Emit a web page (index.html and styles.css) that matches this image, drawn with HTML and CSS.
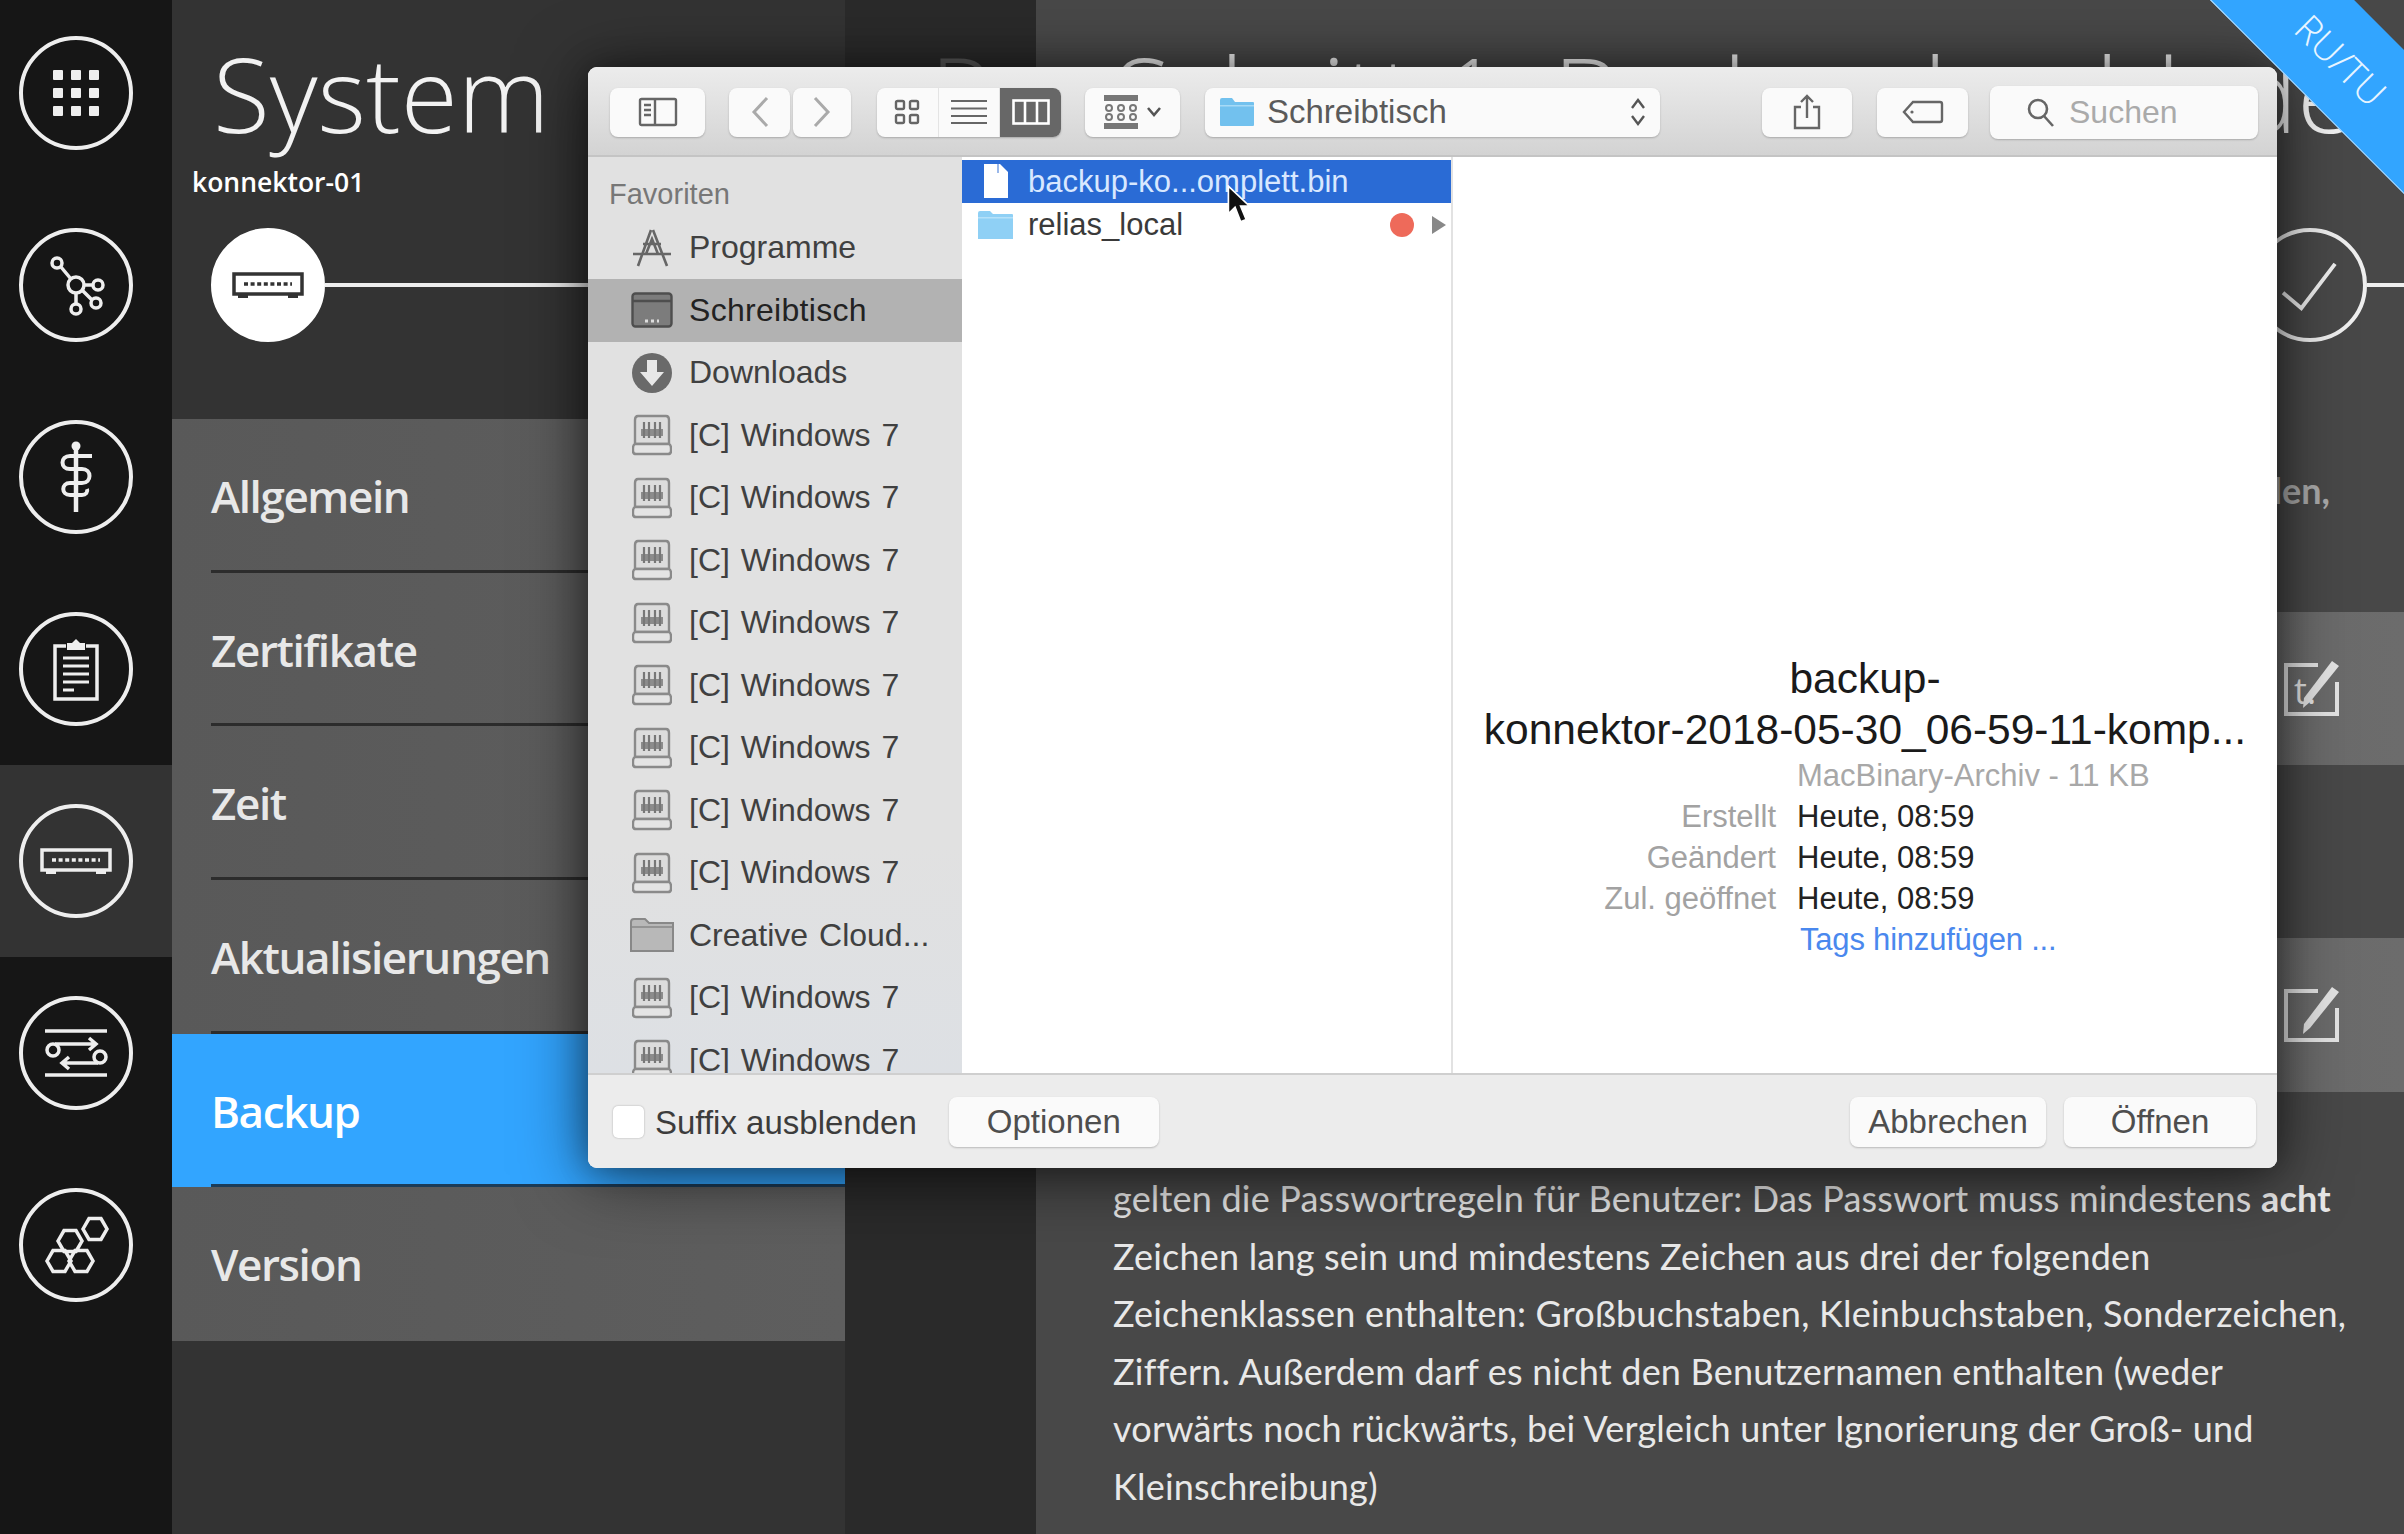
FILE: index.html
```html
<!DOCTYPE html>
<html lang="de">
<head>
  <meta charset="UTF-8" />
  <title>System - konnektor-01</title>
  <link rel="stylesheet" href="styles.css">
</head>
<body>
  <svg class="defs" width="0" height="0">
    <symbol id="device" viewBox="-36 -14 72 28">
      <rect x="-34" y="-11" width="68" height="20" fill="none" stroke="currentColor" stroke-width="3.5"/>
      <path d="M-24 -1H24" stroke="currentColor" stroke-width="3.5" stroke-dasharray="4 2.6" fill="none"/>
      <path d="M-30 11H-20M20 11H30" stroke="currentColor" stroke-width="4" fill="none"/>
    </symbol>
    <symbol id="disk" viewBox="0 0 40 42">
      <path d="M6 2H34Q37 2 37 6V30H3V6Q3 2 6 2Z" fill="#dcdcdc" stroke="#8a8a8a" stroke-width="2.4"/>
      <path d="M3 30Q1 31 1 34V37Q1 40 4 40H36Q39 40 39 37V34Q39 31 37 30Z" fill="#e4e4e4" stroke="#8a8a8a" stroke-width="2.4"/>
      <path d="M9 15H31V22H9Z" fill="#8c8c8c"/>
      <path d="M12 8V24M17 8V24M23 8V24M28 8V24" stroke="#777" stroke-width="2.2"/>
    </symbol>
    <symbol id="edit-pen" viewBox="0 0 58 58">
      <path d="M36 5H4V54H55V22" fill="none" stroke="currentColor" stroke-width="4"/>
      <path d="M57 6L28 42L21 48L22 38L50 1Z" fill="currentColor"/>
    </symbol>
  </svg>

  <div class="page">
    <nav class="rail">
      <div class="rail-item">
        <span class="circle">
          <svg viewBox="-53 -53 106 106"><g fill="currentColor">
            <rect x="-23" y="-23" width="10" height="10" rx="1"/><rect x="-5" y="-23" width="10" height="10" rx="1"/><rect x="13" y="-23" width="10" height="10" rx="1"/>
            <rect x="-23" y="-5" width="10" height="10" rx="1"/><rect x="-5" y="-5" width="10" height="10" rx="1"/><rect x="13" y="-5" width="10" height="10" rx="1"/>
            <rect x="-23" y="13" width="10" height="10" rx="1"/><rect x="-5" y="13" width="10" height="10" rx="1"/><rect x="13" y="13" width="10" height="10" rx="1"/>
          </g></svg>
        </span>
      </div>
      <div class="rail-item">
        <span class="circle">
          <svg viewBox="-53 -53 106 106"><g fill="none" stroke="currentColor" stroke-width="3.5">
            <circle r="8"/><circle cx="-19" cy="-22" r="5"/><circle cx="22" cy="0" r="5"/><circle cx="20" cy="18" r="5"/><circle cx="0" cy="24" r="5"/>
            <path d="M-5 -6L-15 -18M8 0H17M6 5L16 15M0 8V19"/>
          </g></svg>
        </span>
      </div>
      <div class="rail-item">
        <span class="circle">
          <svg viewBox="-53 -53 106 106">
            <circle cx="0" cy="-31" r="4.5" fill="currentColor"/>
            <path d="M0 -30V35" stroke="currentColor" stroke-width="4.5" fill="none"/>
            <path d="M16 -21H-6C-16 -21 -16 -8 -6 -8H6C16 -8 16 6 6 6H-6C-15 6 -15 18 -6 18H6C10 18 12 15 11 12" stroke="currentColor" stroke-width="4" fill="none"/>
          </svg>
        </span>
      </div>
      <div class="rail-item">
        <span class="circle">
          <svg viewBox="-53 -53 106 106">
            <path d="M-10 -23H-21V30H21V-23H10" fill="none" stroke="currentColor" stroke-width="3.5"/>
            <path d="M-9 -26H-4L0 -30L4 -26H9V-19H-9Z" fill="currentColor"/>
            <path d="M-13 -11H13M-13 -3H13M-13 5H13M-13 13H13M-13 21H-2" stroke="currentColor" stroke-width="3" fill="none"/>
          </svg>
        </span>
      </div>
      <div class="rail-item active">
        <span class="circle">
          <svg class="device-icon"><use href="#device"/></svg>
        </span>
      </div>
      <div class="rail-item">
        <span class="circle">
          <svg viewBox="-53 -53 106 106"><g fill="none" stroke="currentColor" stroke-width="3.5">
            <path d="M-31 -22H31M-31 22H31"/>
            <circle cx="-23" cy="-3" r="6"/><circle cx="24" cy="4" r="6"/>
            <path d="M-21 -9H20M13 -15L20 -9L13 -3M22 10H-14M-7 4L-14 10L-7 16"/>
          </g></svg>
        </span>
      </div>
      <div class="rail-item">
        <span class="circle">
          <svg viewBox="-53 -53 106 106"><g fill="none" stroke="currentColor" stroke-width="3.5">
            <path d="M-29 16L-23 5.6H-11L-5 16L-11 26.4H-23Z"/>
            <path d="M-7 16L-1 5.6H11L17 16L11 26.4H-1Z"/>
            <path d="M-18 -4L-12 -14.4H0L6 -4L0 6.4H-12Z"/>
            <path d="M7 -16L13 -26.4H25L31 -16L25 -5.6H13Z"/>
          </g></svg>
        </span>
      </div>
    </nav>

    <aside class="side">
      <header class="side-head">
        <h1 class="big-title">System</h1>
        <div class="host">konnektor-01</div>
        <div class="stepper">
          <span class="circle filled"><svg class="device-icon"><use href="#device"/></svg></span>
          <span class="step-line"></span>
        </div>
      </header>
      <ul class="menu">
        <li class="menu-item"><span>Allgemein</span></li>
        <li class="menu-item"><span>Zertifikate</span></li>
        <li class="menu-item"><span>Zeit</span></li>
        <li class="menu-item"><span>Aktualisierungen</span></li>
        <li class="menu-item selected"><span>Backup</span></li>
        <li class="menu-item last"><span>Version</span></li>
      </ul>
    </aside>

    <div class="spacer-col"></div>

    <main class="main">
      <h2 class="big-title step-title"><span class="prev-step">P</span>Schritt 1: Backup hochladen</h2>
      <div class="stepper main-stepper">
        <span class="step-line"></span>
        <span class="circle done">
          <svg viewBox="-55 -55 110 110"><path d="M-28 8L-9 24L26 -22" fill="none" stroke="currentColor" stroke-width="4"/></svg>
        </span>
        <span class="step-line tail"></span>
      </div>
      <p class="intro">Wählen Sie eine Sicherung zum Hochladen,</p>
      <div class="row-box">
        <svg class="edit-icon" viewBox="0 0 58 58">
          <use href="#edit-pen"/>
          <text x="12" y="44" class="edit-t">t.</text>
        </svg>
      </div>
      <div class="row-box second">
        <svg class="edit-icon"><use href="#edit-pen"/></svg>
      </div>
      <p class="rules">gelten die Passwortregeln für Benutzer: Das Passwort muss mindestens <b>acht</b><br>
        Zeichen lang sein und mindestens Zeichen aus drei der folgenden<br>
        Zeichenklassen enthalten: Großbuchstaben, Kleinbuchstaben, Sonderzeichen,<br>
        Ziffern. Außerdem darf es nicht den Benutzernamen enthalten (weder<br>
        vorwärts noch rückwärts, bei Vergleich unter Ignorierung der Groß- und<br>
        Kleinschreibung)</p>
    </main>
  </div>

  <!-- datei-dialog -->
  <section class="dialog">
    <div class="toolbar">
      <button class="tb-btn btn-sidebar">
        <svg width="40" height="30" viewBox="0 0 40 30"><g fill="none" stroke="#666" stroke-width="2.4">
          <rect x="2" y="2" width="36" height="26" rx="1.5"/><path d="M17 2V28M6 8H13M6 13H13M6 18H13"/>
        </g></svg>
      </button>
      <button class="tb-btn btn-back">
        <svg width="20" height="34" viewBox="0 0 20 34"><path d="M17 3L4 17L17 31" fill="none" stroke="#aaa" stroke-width="3"/></svg>
      </button>
      <button class="tb-btn btn-forward">
        <svg width="20" height="34" viewBox="0 0 20 34"><path d="M3 3L16 17L3 31" fill="none" stroke="#aaa" stroke-width="3"/></svg>
      </button>
      <div class="segment">
        <span class="seg">
          <svg width="26" height="26" viewBox="0 0 26 26"><g fill="none" stroke="#666" stroke-width="2.4">
            <rect x="2" y="2" width="8" height="8" rx="1.5"/><rect x="16" y="2" width="8" height="8" rx="1.5"/><rect x="2" y="16" width="8" height="8" rx="1.5"/><rect x="16" y="16" width="8" height="8" rx="1.5"/>
          </g></svg>
        </span>
        <span class="seg">
          <svg width="36" height="26" viewBox="0 0 36 26"><path d="M0 2H36M0 9.500H36M0 17H36M0 24H36" stroke="#666" stroke-width="2.2"/></svg>
        </span>
        <span class="seg on">
          <svg width="38" height="26" viewBox="0 0 38 26"><g fill="none" stroke="#fff" stroke-width="2.6">
            <rect x="1.500" y="1.500" width="35" height="23"/><path d="M13 1.500V24.500M25 1.500V24.500"/>
          </g></svg>
        </span>
      </div>
      <button class="tb-btn btn-arrange">
        <svg width="34" height="34" viewBox="0 0 34 34"><g fill="#777">
          <rect x="0" y="0" width="34" height="6"/><rect x="0" y="28" width="34" height="6"/>
        </g><g fill="none" stroke="#777" stroke-width="2">
          <circle cx="5" cy="13" r="3"/><circle cx="17" cy="13" r="3"/><circle cx="29" cy="13" r="3"/>
          <circle cx="5" cy="22" r="3"/><circle cx="17" cy="22" r="3"/><circle cx="29" cy="22" r="3"/>
        </g></svg>
        <svg width="16" height="10" viewBox="0 0 16 10"><path d="M2 1L8 8L14 1" fill="none" stroke="#555" stroke-width="2.6"/></svg>
      </button>
      <button class="tb-btn btn-path">
        <svg width="36" height="30" viewBox="0 0 36 30"><path d="M1 3Q1 1 3 1H13L16 5H34Q35 5 35 6V28Q35 29 34 29H2Q1 29 1 28Z" fill="#72c1ee"/><rect x="1" y="8" width="34" height="1.500" fill="#a6daf6"/></svg>
        <span class="path-name">Schreibtisch</span>
        <svg class="updown" width="16" height="30" viewBox="0 0 16 30"><path d="M2 11L8 3L14 11M2 19L8 27L14 19" fill="none" stroke="#555" stroke-width="2.4"/></svg>
      </button>
      <button class="tb-btn btn-share">
        <svg width="28" height="36" viewBox="0 0 28 36"><path d="M8 13H2V34H26V13H20M14 24V2M8 8L14 2L20 8" fill="none" stroke="#666" stroke-width="2.4"/></svg>
      </button>
      <button class="tb-btn btn-tag">
        <svg width="42" height="24" viewBox="0 0 42 24"><path d="M11 2H38Q40 2 40 4V20Q40 22 38 22H11L2 12Z" fill="none" stroke="#666" stroke-width="2.4"/><circle cx="10" cy="12" r="1.600" fill="#666"/></svg>
      </button>
      <div class="search">
        <svg width="30" height="30" viewBox="0 0 30 30"><circle cx="12" cy="12" r="9" fill="none" stroke="#666" stroke-width="2.6"/><path d="M18 19L27 29" stroke="#666" stroke-width="2.6"/></svg>
        <span>Suchen</span>
      </div>
    </div>

    <div class="panes">
      <div class="places">
        <div class="places-title">Favoriten</div>
        <ul class="place-list">
          <li class="place">
            <span class="place-icon"><svg width="44" height="42" viewBox="0 0 44 42"><path d="M21 3L8 39M23 3L37 39M3 27H41M13 17H31M16 27L22 12L28 27" fill="none" stroke="#666" stroke-width="2.6"/></svg></span>
            Programme
          </li>
          <li class="place current">
            <span class="place-icon"><svg width="42" height="36" viewBox="0 0 42 36"><rect x="1.500" y="1.500" width="39" height="33" rx="3" fill="#7c7c7c" stroke="#4e4e4e" stroke-width="2.4"/><path d="M2 9H40" stroke="#4e4e4e" stroke-width="2.4"/><path d="M14 29H28" stroke="#ddd" stroke-width="3" stroke-dasharray="3 3"/></svg></span>
            Schreibtisch
          </li>
          <li class="place">
            <span class="place-icon"><svg width="42" height="42" viewBox="0 0 42 42"><circle cx="21" cy="21" r="20" fill="#6a6a6a"/><path d="M16 8H26V20H33L21 34L9 20H16Z" fill="#e8e8e8"/></svg></span>
            Downloads
          </li>
          <li class="place"><span class="place-icon"><svg width="40" height="42"><use href="#disk"/></svg></span>[C] Windows 7</li>
          <li class="place"><span class="place-icon"><svg width="40" height="42"><use href="#disk"/></svg></span>[C] Windows 7</li>
          <li class="place"><span class="place-icon"><svg width="40" height="42"><use href="#disk"/></svg></span>[C] Windows 7</li>
          <li class="place"><span class="place-icon"><svg width="40" height="42"><use href="#disk"/></svg></span>[C] Windows 7</li>
          <li class="place"><span class="place-icon"><svg width="40" height="42"><use href="#disk"/></svg></span>[C] Windows 7</li>
          <li class="place"><span class="place-icon"><svg width="40" height="42"><use href="#disk"/></svg></span>[C] Windows 7</li>
          <li class="place"><span class="place-icon"><svg width="40" height="42"><use href="#disk"/></svg></span>[C] Windows 7</li>
          <li class="place"><span class="place-icon"><svg width="40" height="42"><use href="#disk"/></svg></span>[C] Windows 7</li>
          <li class="place">
            <span class="place-icon"><svg width="44" height="34" viewBox="0 0 44 34"><path d="M1 4Q1 1 4 1H15L19 5H43V33H1Z" fill="#b8b8b8" stroke="#888" stroke-width="2"/><path d="M1 9H43" stroke="#888" stroke-width="1.500"/></svg></span>
            Creative Cloud...
          </li>
          <li class="place"><span class="place-icon"><svg width="40" height="42"><use href="#disk"/></svg></span>[C] Windows 7</li>
          <li class="place"><span class="place-icon"><svg width="40" height="42"><use href="#disk"/></svg></span>[C] Windows 7</li>
        </ul>
      </div>

      <div class="files">
        <div class="file picked">
          <span class="file-icon"><svg width="30" height="36" viewBox="0 0 30 36"><path d="M3 0H19L27 8V34H3Z" fill="#fff"/><path d="M17 0V9" stroke="#9ab8ea" stroke-width="2"/></svg></span>
          backup-ko...omplett.bin
        </div>
        <div class="file">
          <span class="file-icon"><svg width="37" height="30" viewBox="0 0 37 30"><path d="M1 3Q1 1 3 1H13L16 4H35Q36 4 36 5V29H1Z" fill="#8fd0f5"/><rect x="1" y="7" width="35" height="1.500" fill="#b6e1f9"/></svg></span>
          relias_local
          <span class="red-tag"></span>
          <svg class="more" width="14" height="18" viewBox="0 0 14 18"><path d="M0 0L14 9L0 18Z" fill="#888"/></svg>
        </div>
      </div>

      <div class="preview">
        <div class="preview-name">backup-<br>konnektor-2018-05-30_06-59-11-komp...</div>
        <dl class="meta">
          <dt></dt><dd class="kind">MacBinary-Archiv - 11 KB</dd>
          <dt>Erstellt</dt><dd>Heute, 08:59</dd>
          <dt>Geändert</dt><dd>Heute, 08:59</dd>
          <dt>Zul. geöffnet</dt><dd>Heute, 08:59</dd>
          <dt></dt><dd class="tags">Tags hinzufügen ...</dd>
        </dl>
      </div>
    </div>

    <div class="dialog-foot">
      <span class="check"></span>
      <span class="check-label">Suffix ausblenden</span>
      <button class="foot-btn btn-options">Optionen</button>
      <button class="foot-btn btn-cancel">Abbrechen</button>
      <button class="foot-btn btn-open">Öffnen</button>
    </div>
  </section>

  <svg class="cursor" width="27" height="40" viewBox="0 0 24 36"><path d="M2 1V26L8 20L13 33L18 31L13 19H21Z" fill="#111" stroke="#fff" stroke-width="1.500"/></svg>

  <div class="ribbon">RU/TU</div>
</body>
</html>
```

FILE: styles.css
```css
* { box-sizing: border-box; margin: 0; padding: 0; }
html, body { height: 100%; }
body {
  width: 2404px; height: 1534px;
  overflow: hidden; position: relative;
  background: #333;
  font-family: "Open Sans", "Liberation Sans", sans-serif;
  color: #fff;
}
ul { list-style: none; }
.defs { position: absolute; }

.page { display: flex; height: 1534px; }

/* linke leiste */
.rail { width: 172px; flex: none; background: #161616; margin-top: -3px; height: 1537px; }
.rail-item { height: 192px; display: flex; align-items: center; padding-left: 19px; }
.rail-item.active { background: #333; }
.circle {
  width: 114px; height: 114px; flex: none;
  border: 4px solid #eee; border-radius: 50%;
  display: flex; align-items: center; justify-content: center;
  color: #eee;
}
.circle svg { width: 106px; height: 106px; }
.circle .device-icon { width: 72px; height: 28px; }
.circle.filled { background: #fff; border-color: #fff; color: #333; }

/* menu spalte */
.side { width: 673px; flex: none; background: #333; }
.side-head { height: 419px; padding-top: 33px; }
.big-title { font-size: 104px; font-weight: 300; line-height: 120px; color: #f2f2f2; white-space: nowrap; }
.side-head .big-title { padding-left: 41px; }
.host { margin: 11px 0 0 20px; font-size: 26.500px; line-height: 36px; font-weight: 600; color: #fff; }
.stepper { display: flex; align-items: center; height: 114px; }
.side-head .stepper { margin: 28px 0 0 39px; }
.step-line { flex: 1; height: 4px; background: #eee; }

.menu-item {
  height: 153.700px;
  padding-left: 39px;
  background: linear-gradient(to right, #595959, #5e5e5e);
  font-size: 44px; font-weight: 600; letter-spacing: -1.400px; color: #e8e8e8;
}
.menu-item span {
  display: flex; align-items: center;
  height: 100%; padding-top: 3px;
  border-bottom: 3px solid #2c2c2c;
}
.menu-item.selected { background: #32a5ff; color: #fff; }
.menu-item.selected span { border-bottom-color: #1c3c58; }
.menu-item.last span { border-bottom: 0; padding-top: 0; }

.spacer-col { width: 191px; flex: none; background: #2a2a2a; }

/* hauptbereich */
.main { flex: 1; background: #484848; padding-top: 33px; min-width: 0; }
.step-title { margin-left: -106px; }
.prev-step { display: inline-block; width: 184px; color: #5a5a5a; }
.main-stepper { margin-top: 75px; }
.step-line.tail { flex: none; width: 37px; }
.circle.done { background: transparent; }
.intro {
  margin-top: 119px; padding-right: 74px;
  font-family: Lato, "Open Sans", sans-serif;
  font-size: 36px; font-weight: 700; line-height: 58px; text-align: right; white-space: nowrap; color: #aaa;
}
.row-box {
  margin-top: 93px; height: 153px;
  background: linear-gradient(to right, #5a5a5a, #6c6c6c);
  display: flex; align-items: center; justify-content: flex-end;
  padding-right: 64px;
}
.row-box.second { margin-top: 173px; height: 154px; }
.edit-icon { width: 58px; height: 58px; color: #e4e4e4; }
.edit-t { font: 500 36px "Open Sans", sans-serif; fill: #e4e4e4; }
.rules {
  margin-top: 78px; padding-left: 77px;
  font-family: Lato, "Open Sans", sans-serif;
  font-size: 36px; letter-spacing: .2px; line-height: 57.600px; white-space: nowrap; color: #e8e8e8;
}
.rules b { font-weight: 700; }

/* datei dialog, liegt ueber der seite */
.dialog {
  position: absolute; left: 588px; top: 67px;
  width: 1689px; height: 1101px;
  display: flex; flex-direction: column;
  background: #fff; color: #333;
  border-radius: 9px; overflow: hidden;
  box-shadow: 0 8px 70px rgba(0,0,0,.6), 0 0 30px rgba(0,0,0,.3);
  font-family: "Liberation Sans", Arial, sans-serif;
}
.toolbar {
  height: 90px; flex: none;
  display: flex; align-items: center; padding: 2px 19px 0 22px;
  background: linear-gradient(#ececec, #d3d3d3);
  border-bottom: 2px solid #c4c4c4;
}
.tb-btn, .foot-btn, .search, .segment {
  border: 0; border-radius: 8px; background: #fafafa;
  box-shadow: 0 1px 2px rgba(0,0,0,.22);
  font-family: inherit;
}
.tb-btn { height: 49px; display: flex; align-items: center; justify-content: center; flex: none; }
.btn-sidebar { width: 95px; }
.btn-back { width: 61px; margin-left: 24px; }
.btn-forward { width: 58px; margin-left: 3px; }
.segment { width: 184px; height: 49px; margin-left: 26px; display: flex; overflow: hidden; flex: none; }
.seg { flex: 1; display: flex; align-items: center; justify-content: center; border-right: 1px solid #e4e4e4; }
.seg.on { background: #676767; border-right: 0; }
.btn-arrange { width: 95px; margin-left: 24px; gap: 8px; }
.btn-path { width: 455px; margin-left: 25px; justify-content: flex-start; padding: 0 14px; gap: 12px; font-size: 33px; color: #5a5a5a; }
.path-name { flex: 1; text-align: left; }
.btn-share { width: 90px; margin-left: 102px; }
.btn-tag { width: 91px; margin-left: 25px; }
.search {
  width: 268px; height: 53px; margin-left: 22px; flex: none;
  display: flex; align-items: center; gap: 13px; padding-left: 36px;
  font-size: 32px; color: #aaa;
}

.panes { flex: 1; display: flex; min-height: 0; }
.places {
  width: 374px; flex: none; overflow: hidden;
  background: linear-gradient(#e1e1e1 75%, #dde0e4);
}
.places-title { padding: 20px 0 5.500px 21px; font-size: 29px; line-height: 34px; color: #777; }
.place {
  height: 62.500px; display: flex; align-items: center;
  padding-left: 42px;
  font-size: 32px; word-spacing: 2px; color: #404040; white-space: nowrap;
}
.place-icon { width: 44px; margin-right: 15px; display: flex; justify-content: center; }
.place.current { background: #b2b2b2; color: #222; letter-spacing: .3px; }

.files { width: 491px; flex: none; padding-top: 3px; border-right: 2px solid #e2e2e2; }
.file {
  height: 43px; display: flex; align-items: center;
  padding: 0 5px 0 15px;
  font-size: 31px; color: #3a3a3a; white-space: nowrap;
}
.file.picked { background: #2a6bd5; color: #d8e8ff; }
.file-icon { width: 37px; margin-right: 14px; display: flex; justify-content: center; }
.red-tag { width: 24px; height: 24px; margin-left: auto; border-radius: 50%; background: #ee6a5a; }
.more { margin-left: 18px; }

.preview { flex: 1; padding-top: 496px; min-width: 0; }
.preview-name { font-size: 42.500px; line-height: 51px; text-align: center; color: #1a1a1a; white-space: nowrap; }
.meta {
  display: grid; grid-template-columns: 323px 1fr; column-gap: 21px;
  grid-auto-rows: 41px; align-items: center;
  font-size: 31px;
}
.meta dt { text-align: right; color: #a2a2a2; }
.meta dd { color: #222; }
.meta .kind { color: #a8a8a8; }
.meta .tags { color: #4a88ee; padding-left: 3px; letter-spacing: -.2px; }

.dialog-foot {
  height: 95px; flex: none;
  display: flex; align-items: center; padding: 0 21px 0 25px;
  background: #ececec; border-top: 2px solid #cfcfcf;
}
.check { width: 31px; height: 32px; background: #fff; border-radius: 5px; box-shadow: 0 0 2px rgba(0,0,0,.3); }
.check-label { margin: 3px 0 0 11px; font-size: 33px; color: #3c3c3c; }
.foot-btn { height: 50px; font-size: 33px; color: #4e4e4e; }
.btn-options { width: 210px; margin-left: 32px; }
.btn-cancel { width: 196px; margin-left: auto; }
.btn-open { width: 192px; margin-left: 18px; }

.cursor { position: absolute; left: 1226px; top: 185px; }

.ribbon {
  position: absolute; left: 2145px; top: 12px;
  width: 400px; height: 102px;
  transform: rotate(45deg);
  background: #32a5ff; color: #e8f5ff;
  font-size: 38px; font-weight: 300; line-height: 102px; text-align: center;
  text-indent: -10px;
  border-bottom: 1px solid #bfe2ff;
}
```
